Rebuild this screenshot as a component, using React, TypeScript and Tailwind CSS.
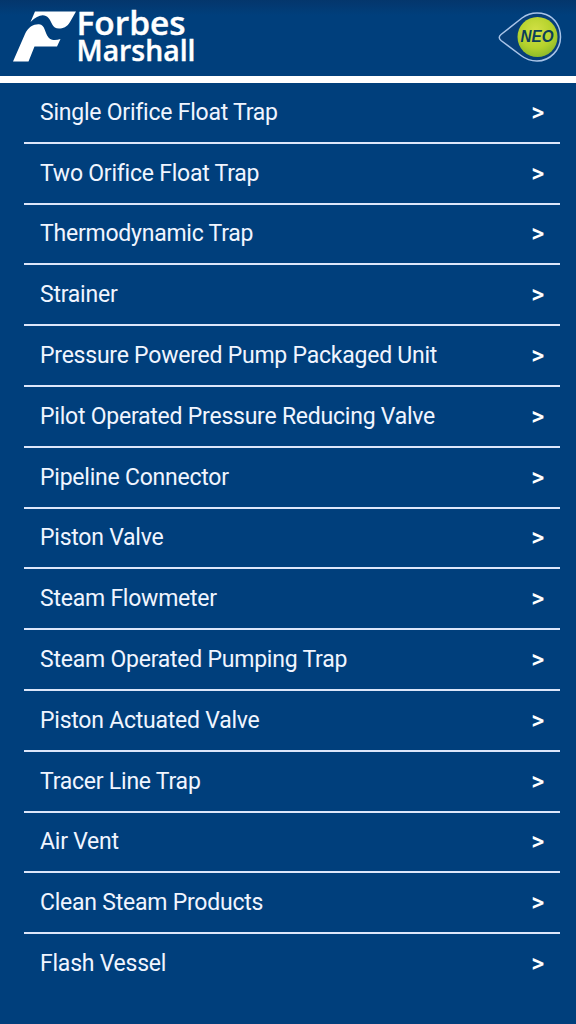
const products: string[] = [
  "Single Orifice Float Trap",
  "Two Orifice Float Trap",
  "Thermodynamic Trap",
  "Strainer",
  "Pressure Powered Pump Packaged Unit",
  "Pilot Operated Pressure Reducing Valve",
  "Pipeline Connector",
  "Piston Valve",
  "Steam Flowmeter",
  "Steam Operated Pumping Trap",
  "Piston Actuated Valve",
  "Tracer Line Trap",
  "Air Vent",
  "Clean Steam Products",
  "Flash Vessel",
];

function ForbesMarshallLogo() {
  return (
    <svg width="200" height="70" viewBox="0 0 200 70" fill="white" role="img" aria-label="Forbes Marshall">
      <path d="M35 11.5H76L70 22C67 27 63 28.5 59 28.5C52 28.5 52 22 48.5 18C44.5 13.5 38 14.5 30.5 22Z" />
      <path d="M13 61.5L25 34C28 27 34 24 39 24.3C45.500 25 44.500 33 48.500 37.500C51.500 40.700 56 40.500 60.500 39L57 46.500H34.500L28.500 61.500Z" />
      <g className="font-['Open_Sans'] font-semibold" stroke="white" strokeWidth="0.4">
        <text x="76.500" y="35" fontSize="32" textLength="109" lengthAdjust="spacingAndGlyphs">Forbes</text>
        <text x="76.500" y="61.300" fontSize="29" textLength="119" lengthAdjust="spacingAndGlyphs">Marshall</text>
      </g>
    </svg>
  );
}

function NeoBadge() {
  return (
    <svg width="80" height="76" viewBox="496 0 80 76" role="img" aria-label="NEO">
      <defs>
        <radialGradient id="lime" cx="0.45" cy="0.35" r="0.65">
          <stop offset="0" stopColor="#d3e046" />
          <stop offset="0.65" stopColor="#b5d22c" />
          <stop offset="1" stopColor="#8fbb2b" />
        </radialGradient>
      </defs>
      <path
        d="M501 34.500L522 18C529 13 538 12 546 14.500C555 18 560.500 26.500 560.500 37C560.500 50 550 61 537 61C531 61 525.500 59 521 55.500L501 40.500Q497.500 37.500 501 34.500Z"
        fill="#073f79"
        stroke="#a9c4e8"
        strokeWidth="1.500"
      />
      <circle cx="537.500" cy="37" r="20" fill="url(#lime)" />
      <text x="520.500" y="42.300" fontSize="16" fill="#0c3e59" textLength="33" lengthAdjust="spacingAndGlyphs" className="font-['Liberation_Sans'] font-bold italic">NEO</text>
    </svg>
  );
}

export default function App() {
  return (
    <div className="flex h-[1024px] w-[576px] flex-col overflow-hidden bg-[#003f7c] font-['Roboto',sans-serif] text-[#f0f5ff]">
      <header className="flex h-[83px] shrink-0 items-start justify-between overflow-hidden border-b-[7px] border-white bg-linear-to-b from-[#04366c] to-[#003f7c] to-20%">
        <ForbesMarshallLogo />
        <NeoBadge />
      </header>
      <ul className="mr-4 ml-6 flex flex-col">
        {products.map((name) => (
          <li
            key={name}
            className="flex h-[60.800px] items-center justify-between border-b-2 border-[#dce6fa] pr-4 pl-4 text-[23px] leading-none tracking-[-0.23px] last:border-transparent"
          >
            <span>{name}</span>
            <span className="text-[25px] font-medium text-white">&gt;</span>
          </li>
        ))}
      </ul>
    </div>
  );
}
